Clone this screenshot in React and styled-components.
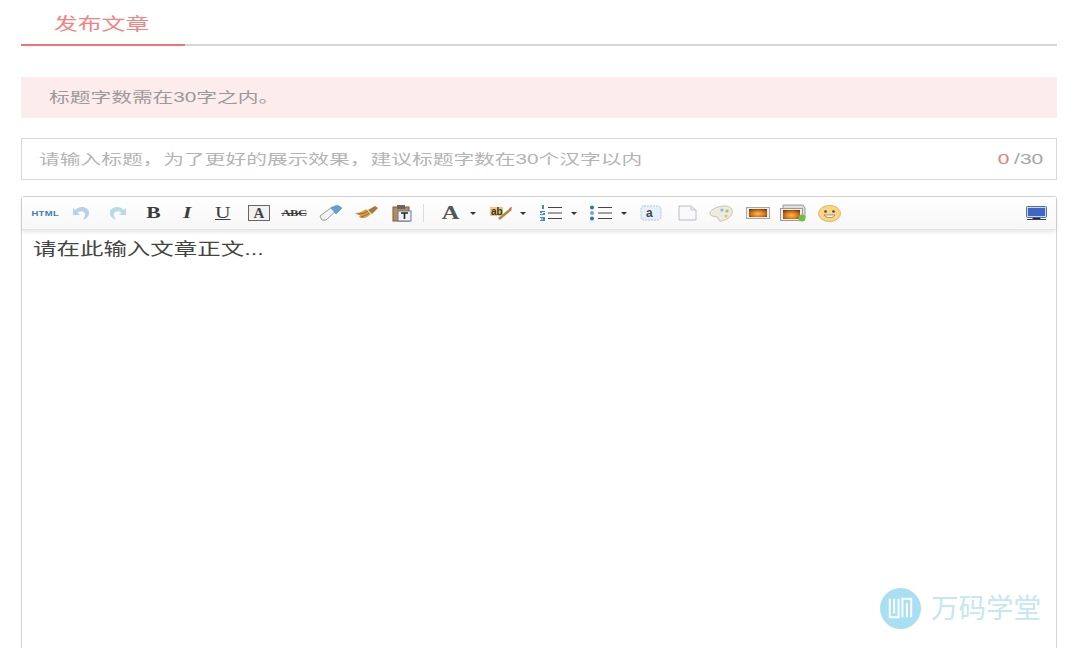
import styled, { createGlobalStyle } from "styled-components";

const GlobalStyle = createGlobalStyle`
  html, body {
    margin: 0;
    height: 100%;
    overflow: hidden;
    background: #fff;
    font-family: "Liberation Sans", "Noto Sans CJK SC", sans-serif;
  }
`;

const Page = styled.div`
  position: relative;
  height: 648px;
  padding: 0 23px 0 21px;
  overflow: hidden;
`;

const Tabs = styled.div`
  height: 46px;
  box-sizing: border-box;
  border-bottom: 2px solid #d6d6d6;
  display: flex;
`;

const Tab = styled.div`
  width: 164px;
  height: 46px;
  box-sizing: border-box;
  padding: 15px 0 0 33px;
  border-bottom: 2px solid #f27575;
  color: #f58282;
  font-size: 17px;
  line-height: 20px;
`;

// the whole reference is wider than it is tall, so the text is stretched sideways
const Wide = styled.span`
  display: inline-block;
  white-space: nowrap;
  transform: scaleX(${(p) => p.$x || 1.48});
  transform-origin: ${(p) => (p.$right ? "right" : "left")} center;
`;

const Notice = styled.div`
  margin-top: 31px;
  height: 41px;
  padding-left: 28px;
  background: #fdecec;
  color: #9a9a9a;
  font-size: 14px;
  line-height: 41px;
`;

const TitleBox = styled.div`
  margin-top: 20px;
  height: 40px;
  border: 1px solid #d9d9d9;
  display: flex;
  justify-content: space-between;
  padding: 0 13px 0 17px;
  color: #b4b4b4;
  font-size: 14px;
  line-height: 40px;
`;

const Count = styled.div`
  color: #a5a5a5;
  em {
    font-style: normal;
    color: #ee7b7b;
    margin-right: 3px;
  }
`;

const Editor = styled.div`
  margin-top: 16px;
  height: 520px;
  border: 1px solid #d4d4d4;
  border-radius: 3px 3px 0 0;
`;

const Toolbar = styled.div`
  height: 32px;
  display: flex;
  align-items: center;
  padding-left: 5px;
  background: linear-gradient(#ffffff, #f7f7f7);
  border-bottom: 1px solid #e4e4e4;
  box-shadow: 0 2px 4px rgba(0, 0, 0, 0.1);
`;

const Cell = styled.div`
  flex: none;
  box-sizing: border-box;
  width: ${(p) => p.$w}px;
  height: 22px;
  padding-left: ${(p) => p.$pl || 0}px;
  display: flex;
  align-items: center;
  justify-content: center;
  color: ${(p) => p.$color || "#3c3c3c"};
  font-family: "Liberation Serif", serif;
  font-weight: ${(p) => (p.$under ? "normal" : "bold")};
  font-size: ${(p) => p.$size || 16}px;
  font-style: ${(p) => (p.$italic ? "italic" : "normal")};
  text-decoration: ${(p) => (p.$under ? "underline" : "none")};
`;

const Glyph = styled.span`
  display: inline-block;
  transform: scaleX(1.35);
`;

const HtmlMark = styled.span`
  display: inline-block;
  font-family: "Liberation Sans", sans-serif;
  font-size: 7px;
  letter-spacing: 0.3px;
  color: #3f7cb4;
  transform: scaleX(1.35);
`;

const BoxedA = styled.span`
  width: 20px;
  height: 14px;
  border: 1px solid #666;
  background: #f2f2f2;
  display: flex;
  align-items: center;
  justify-content: center;
  color: #444;
  font-size: 15px;
  line-height: 14px;
`;

const Strike = styled.span`
  display: inline-block;
  font-size: 9px;
  letter-spacing: -0.3px;
  text-decoration: line-through;
  transform: scaleX(1.4);
`;

const Divider = styled.div`
  flex: none;
  width: 1px;
  height: 18px;
  background: #dcdcdc;
  margin: 0 8px 0 4px;
`;

const Caret = styled.i`
  flex: none;
  width: 0;
  height: 0;
  border-left: 3px solid transparent;
  border-right: 3px solid transparent;
  border-top: 3px solid #333;
`;

const Monitor = styled.div`
  margin-left: auto;
  margin-right: 9px;
  display: flex;
`;

const Body = styled.div`
  padding: 10px 0 0 11px;
  color: #444;
  font-size: 17px;
  line-height: 20px;
`;

const Watermark = styled.div`
  position: absolute;
  left: 880px;
  top: 587px;
  display: flex;
  align-items: center;
  gap: 10px;
  color: #c6e6f0;
  font-size: 27px;
  line-height: 42px;
`;

const MarkText = styled.span`
  display: inline-block;
  transform: scaleX(1.02) translateY(1px);
  transform-origin: left center;
`;

const Undo = ({ flip }) => (
  <svg width="19" height="14" viewBox="0 0 19 14" style={flip ? { transform: "scaleX(-1)" } : undefined}>
    <path d="M1 2v7h7L5.500 6.500c3-2 6.500-1.500 7.500 1 .5 2-.5 4-2 6 4-1 6.500-4 6-7.500-1-5-9.500-7-13.500-2z" fill={flip ? "#b8dbe6" : "#b6d2ea"} />
  </svg>
);

const Eraser = () => (
  <svg width="24" height="16" viewBox="0 0 24 16">
    <path d="M1 11 13 2l5 3L7 15H3z" fill="#f4f4f4" stroke="#9a9a9a" />
    <path d="M12 3l6-3 5 3-6 6z" fill="#5f9fdc" stroke="#4c86bd" strokeWidth=".6" />
  </svg>
);

const Brush = () => (
  <svg width="25" height="16" viewBox="0 0 25 16">
    <path d="M1 8c5 0 8-2 11-4l5 5c-3 3-8 6-12 3 1-1 1-2 0-2-1 0-3-1-4-2z" fill="#d8a24a" />
    <path d="M4 9c4 0 7-1 10-3M7 12c3-1 6-2 8-4" stroke="#94682a" fill="none" />
    <path d="M14 5l7-4 3 2-6 6z" fill="#a9773a" />
  </svg>
);

const Paste = () => (
  <svg width="20" height="17" viewBox="0 0 20 17">
    <rect x="1" y="2" width="16" height="14" fill="#b98a5c" stroke="#7d5a3a" />
    <rect x="5" y="0" width="8" height="4" fill="#666" />
    <rect x="6" y="6" width="13" height="10" fill="#eef2f7" stroke="#68788c" />
    <path d="M9 8h7M12.500 8v6" stroke="#222" strokeWidth="1.600" />
  </svg>
);

const Highlight = () => (
  <svg width="23" height="14" viewBox="0 0 23 14">
    <rect x="0" y="1" width="13" height="9" fill="#f1c877" />
    <path d="M9 13 21 3" stroke="#a88c3a" strokeWidth="2.500" />
    <path d="M19 2l3-1-1 3z" fill="#e2506a" />
    <text x="1" y="9" fontFamily="Liberation Sans" fontSize="10" fontWeight="bold" fill="#333">ab</text>
  </svg>
);

const Lines = ({ children }) => (
  <svg width="24" height="16" viewBox="0 0 24 16">
    {children}
    <path d="M9 2.500h14M9 8h14M9 13.500h14" stroke="#444" />
  </svg>
);

const Ordered = () => (
  <Lines>
    <path d="M3 0h2v4H3zM1 6h5v1H3v1h3v2H1V9h3V8H1zM1 12h5v4H1v-1h3v-.5H2v-1h2V13H1z" fill="#4a86d0" />
  </Lines>
);

const Bullets = () => (
  <Lines>
    <circle cx="3" cy="2.500" r="2" fill="#2f6fb5" />
    <circle cx="3" cy="8" r="2" fill="#7aa5d4" />
    <circle cx="3" cy="13.500" r="2" fill="#2f6fb5" />
  </Lines>
);

const Anchor = () => (
  <svg width="22" height="16" viewBox="0 0 22 16">
    <rect x="1" y="1" width="20" height="14" rx="3" fill="#e6f0fa" stroke="#a9c6e6" strokeDasharray="2 1" />
    <text x="6" y="12" fontFamily="Liberation Sans" fontSize="12" fontWeight="bold" fill="#444">a</text>
  </svg>
);

const Sheet = () => (
  <svg width="19" height="16" viewBox="0 0 19 16">
    <path d="M1 1h12l5 4v10H1z" fill="#f9f9fb" stroke="#b9bcc4" />
    <path d="M13 1v4h5" fill="#e3e5ea" stroke="#c8cad0" />
  </svg>
);

const Palette = () => (
  <svg width="25" height="17" viewBox="0 0 25 17">
    <path d="M1 8c1-4 8-7 15-7 5 0 8 3 7 7-1 5-8 8-12 8-2 0-1-3-3-4-2-1-7 0-7-4z" fill="#ecebdd" stroke="#c6c4b2" />
    <circle cx="13" cy="5" r="1.600" fill="#8fb5d8" />
    <circle cx="18" cy="6" r="1.600" fill="#9fc27a" />
    <circle cx="17" cy="11" r="1.600" fill="#e3c765" />
  </svg>
);

const Photo = () => (
  <svg width="24" height="12" viewBox="0 0 24 12">
    <defs>
      <radialGradient id="sunset" cx=".5" cy=".6" r=".7">
        <stop offset="0" stopColor="#fbbd4a" />
        <stop offset=".5" stopColor="#dd7a1a" />
        <stop offset="1" stopColor="#6a3a14" />
      </radialGradient>
    </defs>
    <rect x=".5" y=".5" width="23" height="11" fill="#ececec" stroke="#a8a8a8" />
    <rect x="3" y="2" width="18" height="8" fill="url(#sunset)" />
  </svg>
);

const PhotoAdd = () => (
  <svg width="27" height="18" viewBox="0 0 27 18">
    <path d="M3 1h20l2 3v10H3z" fill="#dedede" stroke="#9a9a9a" />
    <rect x=".5" y="4.500" width="22" height="12" fill="#ececec" stroke="#9a9a9a" />
    <rect x="3" y="6" width="17" height="9" fill="url(#sunset)" />
    <circle cx="22" cy="14" r="3.500" fill="#6ec13a" />
  </svg>
);

const Smile = () => (
  <svg width="23" height="17" viewBox="0 0 23 17">
    <ellipse cx="11.500" cy="8.500" rx="11" ry="8" fill="#f8d58a" stroke="#e2b25c" />
    <circle cx="7.500" cy="6.500" r="1.300" fill="#5a4420" />
    <circle cx="15.500" cy="6.500" r="1.300" fill="#5a4420" />
    <path d="M6 10h11c-1 3.500-9 3.500-11 0z" fill="#fff" stroke="#8a6a30" strokeWidth=".7" />
  </svg>
);

const Screen = () => (
  <svg width="21" height="15" viewBox="0 0 21 15">
    <rect x=".5" y=".5" width="20" height="11" rx="1" fill="#c9d6ea" stroke="#5a6f94" />
    <rect x="2" y="2" width="17" height="8" fill="#3f66c4" />
    <path d="M7 12h7v1H7zM1 13.500h19" stroke="#2c3c5c" />
  </svg>
);

const Logo = () => (
  <svg width="41" height="41" viewBox="0 0 42 42">
    <circle cx="21" cy="21" r="21" fill="#a9dff2" />
    <path d="M10 11v19h9V11M14.500 11v15M23 30V11h9v19M27.500 15v15" fill="none" stroke="#fff" strokeWidth="2" />
  </svg>
);

const App = () => {
  return (
    <Page>
      <GlobalStyle />
      <Tabs>
        <Tab>
          <Wide $x={1.4}>发布文章</Wide>
        </Tab>
      </Tabs>
      <Notice>
        <Wide>标题字数需在30字之内。</Wide>
      </Notice>
      <TitleBox>
        <Wide>请输入标题，为了更好的展示效果，建议标题字数在30个汉字以内</Wide>
        <Count>
          <Wide $right $x={1.5}>
            <em>0</em>/30
          </Wide>
        </Count>
      </TitleBox>
      <Editor>
        <Toolbar>
          <Cell $w={36}><HtmlMark>HTML</HtmlMark></Cell>
          <Cell $w={36}><Undo /></Cell>
          <Cell $w={36}><Undo flip /></Cell>
          <Cell $w={36}><Glyph>B</Glyph></Cell>
          <Cell $w={33} $italic><Glyph>I</Glyph></Cell>
          <Cell $w={38} $under><Glyph>U</Glyph></Cell>
          <Cell $w={34}><BoxedA>A</BoxedA></Cell>
          <Cell $w={37}><Strike>ABC</Strike></Cell>
          <Cell $w={35}><Eraser /></Cell>
          <Cell $w={36}><Brush /></Cell>
          <Cell $w={35}><Paste /></Cell>
          <Divider />
          <Cell $w={37} $size={18} $color="#555"><Glyph>A</Glyph></Cell>
          <Cell $w={8}><Caret /></Cell>
          <Cell $w={42} $pl={6}><Highlight /></Cell>
          <Cell $w={8}><Caret /></Cell>
          <Cell $w={43} $pl={5}><Ordered /></Cell>
          <Cell $w={8}><Caret /></Cell>
          <Cell $w={42} $pl={4}><Bullets /></Cell>
          <Cell $w={8}><Caret /></Cell>
          <Cell $w={46}><Anchor /></Cell>
          <Cell $w={26}><Sheet /></Cell>
          <Cell $w={42}><Palette /></Cell>
          <Cell $w={32}><Photo /></Cell>
          <Cell $w={38}><PhotoAdd /></Cell>
          <Cell $w={34}><Smile /></Cell>
          <Monitor><Screen /></Monitor>
        </Toolbar>
        <Body>
          <Wide $x={1.38}>请在此输入文章正文...</Wide>
        </Body>
      </Editor>
      <Watermark>
        <Logo />
        <MarkText>万码学堂</MarkText>
      </Watermark>
    </Page>
  );
};

export default App;
